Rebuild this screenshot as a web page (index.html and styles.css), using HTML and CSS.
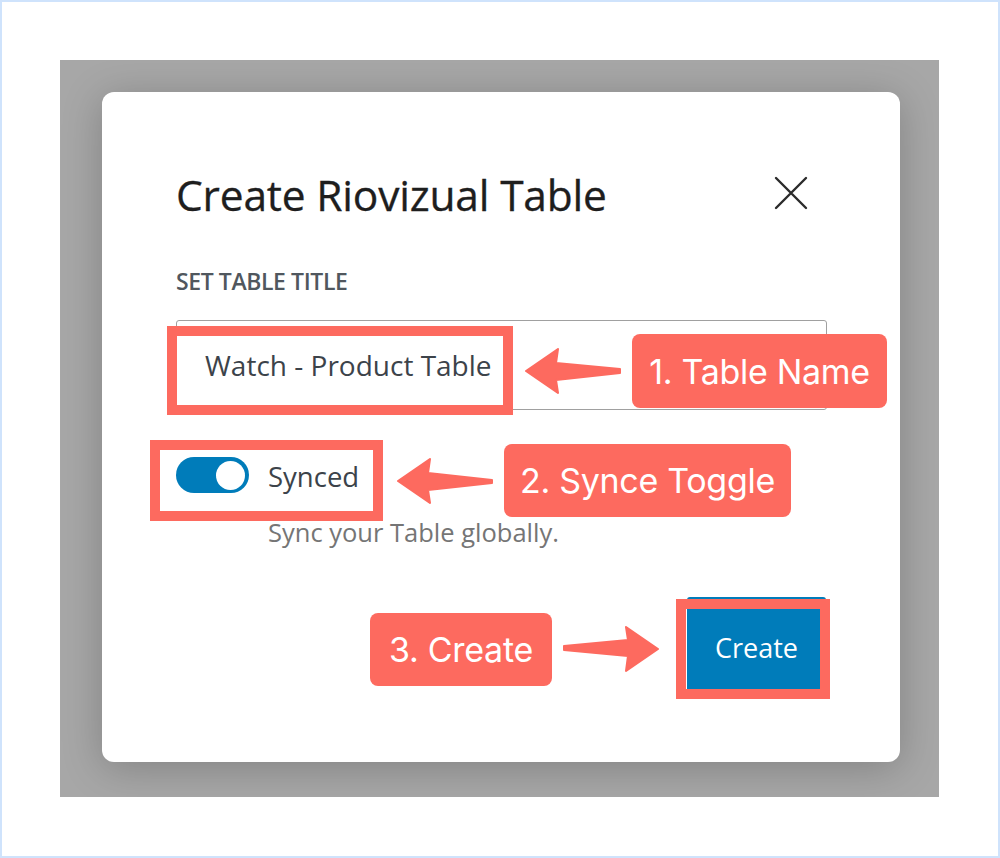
FILE: index.html
```html
<!DOCTYPE html>
<html>
<head>
<meta charset="utf-8">
<link rel="stylesheet" href="styles.css">
</head>
<body>
<div class="page">
  <div class="overlay">
    <div class="modal">
      <div class="modal-header">
        <h1 class="modal-title">Create Riovizual Table</h1>
        <svg class="close-icon" width="34" height="34" viewBox="0 0 34 34"><path d="M2 2 L32 32 M32 2 L2 32" stroke="#2b2b2b" stroke-width="2.4" stroke-linecap="round" fill="none"/></svg>
      </div>
      <div class="field-label">SET TABLE TITLE</div>
      <div class="text-input">Watch - Product Table</div>
      <div class="toggle-row">
        <span class="toggle"><span class="knob"></span></span>
        <span class="toggle-label">Synced</span>
      </div>
      <div class="help-text">Sync your Table globally.</div>
      <div class="modal-footer">
        <button class="primary-btn">Create</button>
      </div>
    </div>
  </div>

  <div class="hl hl-input"></div>
  <div class="hl hl-toggle"></div>
  <div class="hl hl-button"></div>

  <svg class="arrow arrow-1" width="100" height="50" viewBox="0 0 100 50"><polygon points="2,23 34,1 32,15 96,21 96,25 32,32 34,45" fill="#fd6a5f" stroke="#fd6a5f" stroke-width="2" stroke-linejoin="round"/></svg>
  <svg class="arrow arrow-2" width="100" height="50" viewBox="0 0 100 50"><polygon points="2,23 34,1 32,15 96,22 96,25 32,32 34,45" fill="#fd6a5f" stroke="#fd6a5f" stroke-width="2" stroke-linejoin="round"/></svg>
  <svg class="arrow arrow-3" width="100" height="50" viewBox="0 0 100 50"><polygon points="2,20 66,14 64,1 96,23 64,45 66,30 2,24" fill="#fd6a5f" stroke="#fd6a5f" stroke-width="2" stroke-linejoin="round"/></svg>

  <div class="tag tag-1">1. Table Name</div>
  <div class="tag tag-2">2. Synce Toggle</div>
  <div class="tag tag-3">3. Create</div>
</div>
</body>
</html>
```
FILE: styles.css
```css
* { box-sizing: border-box; }
html, body { margin: 0; padding: 0; background: #ffffff; }
.page {
  position: relative;
  width: 1000px;
  height: 858px;
  border: 2px solid #cfe3fc;
  background: #ffffff;
  overflow: hidden;
  font-family: "Open Sans", "Noto Sans", sans-serif;
}
.overlay {
  margin: 58px 0 0 58px;
  width: 879px;
  height: 737px;
  background: #a7a7a7;
  overflow: hidden;
  padding: 32px 0 0 42px;
}
.modal {
  width: 798px;
  height: 670px;
  background: #ffffff;
  border-radius: 12px;
  box-shadow: 0 6px 40px rgba(0,0,0,0.22);
  padding: 73px 73px 0 74px;
  display: flex;
  flex-direction: column;
}
.modal-header {
  display: flex;
  align-items: center;
  justify-content: space-between;
  height: 60px;
}
.modal-title {
  margin: 0;
  font-size: 42.5px;
  font-weight: 400;
  color: #1e1e1e;
  line-height: 60px;
  letter-spacing: -0.2px;
  -webkit-text-stroke: 0.3px #1e1e1e;
}
.close-icon { margin-right: 19px; margin-top: -4px; }
.field-label {
  margin-top: 44px;
  font-size: 23px;
  line-height: 24px;
  font-weight: 600;
  color: #50575e;
  letter-spacing: -0.4px;
}
.text-input {
  margin-top: 27px;
  height: 90px;
  border: 1.5px solid #a0a0a0;
  border-radius: 3px;
  padding-left: 28px;
  display: flex;
  align-items: center;
  font-size: 28px;
  color: #3c434a;
}
.toggle-row {
  margin-top: 47px;
  display: flex;
  align-items: center;
  gap: 19px;
  height: 36px;
}
.toggle {
  width: 73px;
  height: 36px;
  border-radius: 18px;
  background: #007cba;
  display: flex;
  align-items: center;
  justify-content: flex-end;
  padding-right: 4px;
}
.knob {
  width: 29px;
  height: 29px;
  border-radius: 50%;
  background: #ffffff;
}
.toggle-label {
  font-size: 27.5px;
  line-height: 36px;
  color: #3c434a;
  padding-top: 3px;
}
.help-text {
  margin-top: 24px;
  margin-left: 92px;
  font-size: 25.5px;
  line-height: 30px;
  color: #757575;
}
.modal-footer {
  margin-top: 50px;
  display: flex;
  justify-content: flex-end;
  padding-right: 1px;
}
.primary-btn {
  width: 139px;
  height: 96px;
  border: none;
  border-radius: 3px;
  background: #007cba;
  color: #ffffff;
  font-family: "Open Sans", "Noto Sans", sans-serif;
  font-size: 27px;
  padding: 4px 0 0 0;
}
.hl {
  position: absolute;
  border: 10px solid #fd6a5f;
}
.hl-input { left: 165px; top: 324px; width: 346px; height: 89px; }
.hl-toggle { left: 148px; top: 438px; width: 233px; height: 81px; }
.hl-button { left: 674px; top: 597px; width: 154px; height: 100px; }
.arrow { position: absolute; }
.arrow-1 { left: 522px; top: 346px; }
.arrow-2 { left: 394px; top: 456px; }
.arrow-3 { left: 560px; top: 624px; }
.tag {
  position: absolute;
  background: #fd6a5f;
  color: #ffffff;
  border-radius: 8px;
  font-family: "Inter", sans-serif;
  font-weight: 400;
  font-size: 34px;
  letter-spacing: -0.3px;
  display: flex;
  align-items: center;
  justify-content: center;
  height: 74px;
}
.tag-1 { left: 630px; top: 332px; width: 255px; }
.tag-2 { left: 502px; top: 442px; width: 287px; height: 73px; }
.tag-3 { left: 368px; top: 611px; width: 182px; height: 73px; }
```
